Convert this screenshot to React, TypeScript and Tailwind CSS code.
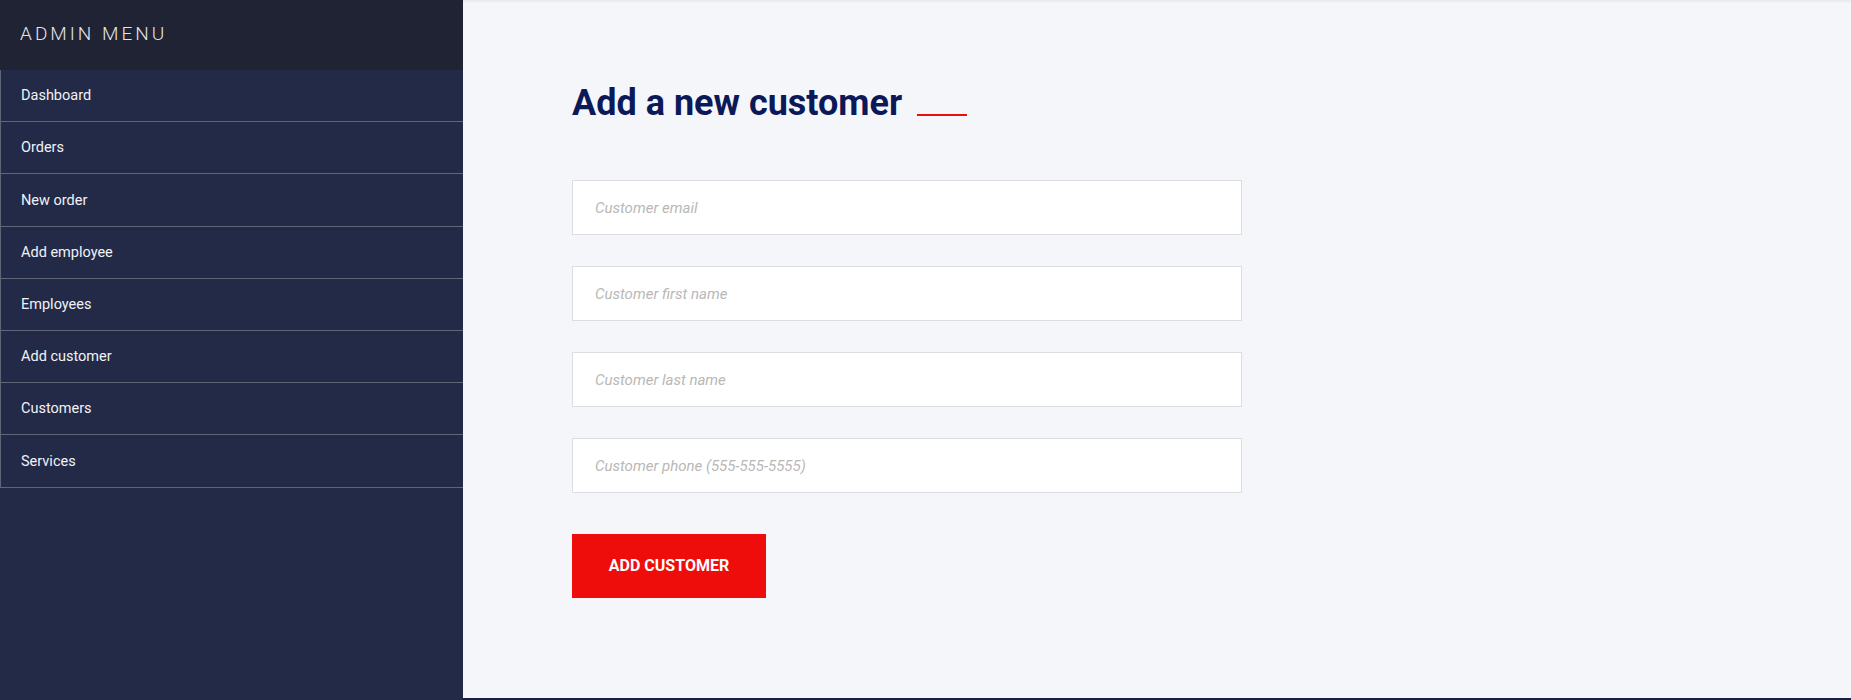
import { useState } from 'react';

const menuItems = [
  'Dashboard',
  'Orders',
  'New order',
  'Add employee',
  'Employees',
  'Add customer',
  'Customers',
  'Services',
];

const fields = [
  { name: 'email', placeholder: 'Customer email' },
  { name: 'firstName', placeholder: 'Customer first name' },
  { name: 'lastName', placeholder: 'Customer last name' },
  { name: 'phone', placeholder: 'Customer phone (555-555-5555)' },
];

export default function App() {
  const [form, setForm] = useState<Record<string, string>>({});

  return (
    <div className="flex h-[700px] w-full font-['Roboto',sans-serif]">
      {/* Sidebar */}
      <aside className="flex w-[463px] shrink-0 flex-col bg-[#232a48]">
        <div className="flex h-[70px] items-center bg-[#1f2333] pl-[20px] pb-[2px] text-[19px] font-light tracking-[3px] text-[#e4e5ea]">
          ADMIN MENU
        </div>
        <ul>
          {menuItems.map((item) => (
            <li
              key={item}
              className="flex h-[52.2px] items-center border-b border-l border-[#5f6477] pl-[20px] pt-[1px] text-[14.5px] text-[#f1f2f5]"
            >
              {item}
            </li>
          ))}
        </ul>
      </aside>

      {/* Main content */}
      <main className="flex-1 border-b-2 border-[#1b2146] bg-[#f5f6fa] pl-[109px] shadow-[inset_0_3px_3px_-2px_rgba(0,0,0,0.08)]">
        <h1 className="mt-[80px] flex items-baseline text-[36px] leading-[46px] font-bold text-[#0c1958]">
          Add a new customer
          <span className="ml-[15px] inline-block h-[2px] w-[50px] translate-y-[1px] bg-[#ee0d0a]" />
        </h1>

        <form
          className="mt-[54px] flex w-[670px] flex-col gap-[31px]"
          onSubmit={(e) => e.preventDefault()}
        >
          {fields.map((f) => (
            <input
              key={f.name}
              type="text"
              value={form[f.name] || ''}
              onChange={(e) => setForm({ ...form, [f.name]: e.target.value })}
              placeholder={f.placeholder}
              className="h-[55px] w-full border border-[#dcdde0] bg-white px-[22px] text-[15px] text-[#333] outline-none placeholder:italic placeholder:text-[#b8b8b8]"
            />
          ))}
          <button
            type="submit"
            className="mt-[10px] h-[64px] w-[194px] bg-[#ee0d0a] text-[16px] font-bold uppercase text-white"
          >
            Add customer
          </button>
        </form>
      </main>
    </div>
  );
}
